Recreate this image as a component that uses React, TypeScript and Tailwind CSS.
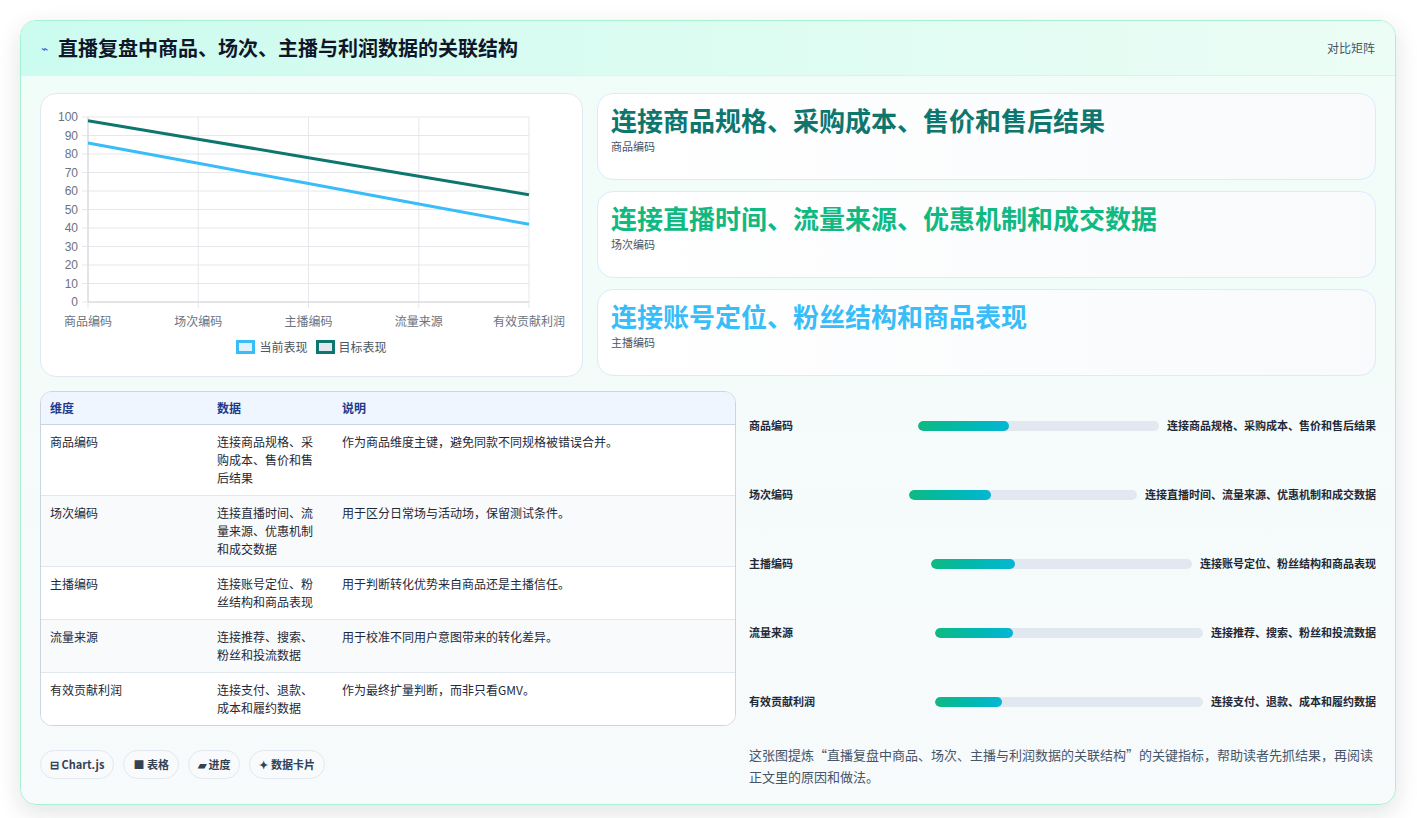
import React from "react";

const font = { fontFamily: '"Noto Sans CJK SC", "Liberation Sans", sans-serif' };

const cats = ["商品编码", "场次编码", "主播编码", "流量来源", "有效贡献利润"];
const cur = [86, 75, 64, 53, 42];
const tgt = [98, 88, 78, 68, 58];

function Chart() {
  const x0 = 47, x1 = 488, y0 = 208, yTop = 23;
  const xs = cats.map((_, i) => x0 + (i * (x1 - x0)) / 4);
  const y = (v: number) => y0 - ((y0 - yTop) * v) / 100;
  const pts = (a: number[]) => a.map((v, i) => `${xs[i]},${y(v)}`).join(" ");
  return (
    <svg width="540" height="282" className="block">
      {Array.from({ length: 11 }).map((_, i) => (
        <g key={i}>
          <line x1={x0 - 6} x2={x1} y1={y(i * 10)} y2={y(i * 10)} stroke="#e5e7eb" />
          <text x={x0 - 10} y={y(i * 10) + 4} textAnchor="end" fontSize="12" fill="#6b7280" fontFamily="Liberation Sans">{i * 10}</text>
        </g>
      ))}
      {xs.map((x, i) => (
        <g key={i}>
          <line x1={x} x2={x} y1={yTop} y2={y0 + 6} stroke="#e5e7eb" />
          <text x={x} y={232} textAnchor="middle" fontSize="12" fill="#6b7280" fontFamily='"Noto Sans CJK SC"'>{cats[i]}</text>
        </g>
      ))}
      <line x1={x0} x2={x0} y1={yTop} y2={y0} stroke="#d1d5db" />
      <line x1={x0} x2={x1} y1={y0} y2={y0} stroke="#d1d5db" />
      <polyline points={pts(cur)} fill="none" stroke="#38bdf8" strokeWidth="3" />
      <polyline points={pts(tgt)} fill="none" stroke="#0f766e" strokeWidth="3" />
    </svg>
  );
}

const cards = [
  ["连接商品规格、采购成本、售价和售后结果", "商品编码", "text-[#0f766e]"],
  ["连接直播时间、流量来源、优惠机制和成交数据", "场次编码", "text-[#10b981]"],
  ["连接账号定位、粉丝结构和商品表现", "主播编码", "text-[#38bdf8]"],
];

const rows = [
  ["商品编码", "连接商品规格、采购成本、售价和售后结果", "作为商品维度主键，避免同款不同规格被错误合并。"],
  ["场次编码", "连接直播时间、流量来源、优惠机制和成交数据", "用于区分日常场与活动场，保留测试条件。"],
  ["主播编码", "连接账号定位、粉丝结构和商品表现", "用于判断转化优势来自商品还是主播信任。"],
  ["流量来源", "连接推荐、搜索、粉丝和投流数据", "用于校准不同用户意图带来的转化差异。"],
  ["有效贡献利润", "连接支付、退款、成本和履约数据", "作为最终扩量判断，而非只看GMV。"],
];
const pct = [38, 36, 32, 29, 25];

export default function App() {
  return (
    <div style={font} className="min-h-[818px] w-[1417px] bg-white pt-5 pl-5 pr-[21px] pb-5">
      <div className="rounded-2xl border border-[#a7f3d0] bg-gradient-to-b from-[#f0fdf8] to-[#f8fafc] shadow-[0_8px_24px_rgba(15,23,42,0.12)] overflow-hidden">
        <div className="h-[55px] flex items-center justify-between px-5 border-b border-[#d1fae5] bg-gradient-to-r from-[#ccfbef] to-[#ecfdf5]">
          <div className="flex items-center gap-[10px]">
            <span className="text-[#2563eb] text-xs">⌁</span>
            <span className="text-[20px] font-bold text-[#0f172a]">直播复盘中商品、场次、主播与利润数据的关联结构</span>
          </div>
          <span className="text-xs text-[#475569]">对比矩阵</span>
        </div>
        <div className="px-[19px] pt-[17px] pb-4">
          <div className="flex gap-[14px]">
            <div className="w-[543px] h-[284px] shrink-0 rounded-2xl border border-[#e2e8f0] bg-white relative">
              <Chart />
              <div className="absolute left-0 right-0 top-[245px] flex justify-center gap-2 text-xs text-[#4b5563]">
                <span className="flex items-center gap-1"><span className="w-[19px] h-[14px] border-[3px] border-[#38bdf8] bg-[#e0f2fe]" />当前表现</span>
                <span className="flex items-center gap-1"><span className="w-[19px] h-[14px] border-[3px] border-[#0f766e] bg-[#e2e8f0]" />目标表现</span>
              </div>
            </div>
            <div className="flex-1 flex flex-col gap-[11px]">
              {cards.map(([t, s, c]) => (
                <div key={s} className="h-[87px] rounded-2xl border border-[#dbeafe] bg-gradient-to-r from-white to-[#f8fafc] px-[13px] pt-[8px]">
                  <div className={`text-[26px] font-bold leading-[36px] ${c}`}>{t}</div>
                  <div className="text-[11px] text-[#475569]">{s}</div>
                </div>
              ))}
            </div>
          </div>
          <div className="flex gap-[13px] mt-[14px]">
            <div className="w-[696px] shrink-0">
              <div className="rounded-xl border border-[#cbd5e1] overflow-hidden bg-white text-xs">
                <div className="flex h-[33px] items-center bg-[#eff6ff] border-b border-[#cbd5e1] font-bold text-[#1e3a8a]">
                  <div className="w-[167px] pl-[9px]">维度</div>
                  <div className="w-[125px] pl-[9px]">数据</div>
                  <div className="pl-[9px]">说明</div>
                </div>
                {rows.map((r, i) => (
                  <div key={i} className={`flex py-2 leading-[18px] text-[#1f2937] ${i % 2 ? "bg-[#f8fafc]" : "bg-white"} ${i < 4 ? "border-b border-[#e2e8f0]" : ""}`}>
                    <div className="w-[167px] pl-[9px]">{r[0]}</div>
                    <div className="w-[125px] pl-[9px] pr-[12px]">{r[1]}</div>
                    <div className="pl-[9px] flex-1">{r[2]}</div>
                  </div>
                ))}
              </div>
              <div className="flex gap-[9px] mt-[24px] text-[11px] font-bold text-[#334155]">
                {["⊟ Chart.js", "■ 表格", "▰ 进度", "✦ 数据卡片"].map((c) => (
                  <span key={c} className="h-[29px] px-[9px] flex items-center rounded-full border border-[#e2e8f0] bg-[#f8fafc]">{c}</span>
                ))}
              </div>
            </div>
            <div className="flex-1 flex flex-col">
              {rows.map((r, i) => (
                <div key={i} className="h-[69px] flex items-center gap-2 text-[11px] font-semibold text-[#1f2937]">
                  <div className="flex-[2] min-w-0">{r[0]}</div>
                  <div className="flex-[3] h-[10px] rounded-full bg-[#e2e8f0] overflow-hidden">
                    <div className="h-full rounded-full bg-gradient-to-r from-[#10b981] to-[#06b6d4]" style={{ width: `${pct[i]}%` }} />
                  </div>
                  <div className="whitespace-nowrap">{r[1]}</div>
                </div>
              ))}
              <div className="mt-[8px] text-[13px] leading-[22px] text-[#475569]">这张图提炼“直播复盘中商品、场次、主播与利润数据的关联结构”的关键指标，帮助读者先抓结果，再阅读正文里的原因和做法。</div>
            </div>
          </div>
        </div>
      </div>
    </div>
  );
}
